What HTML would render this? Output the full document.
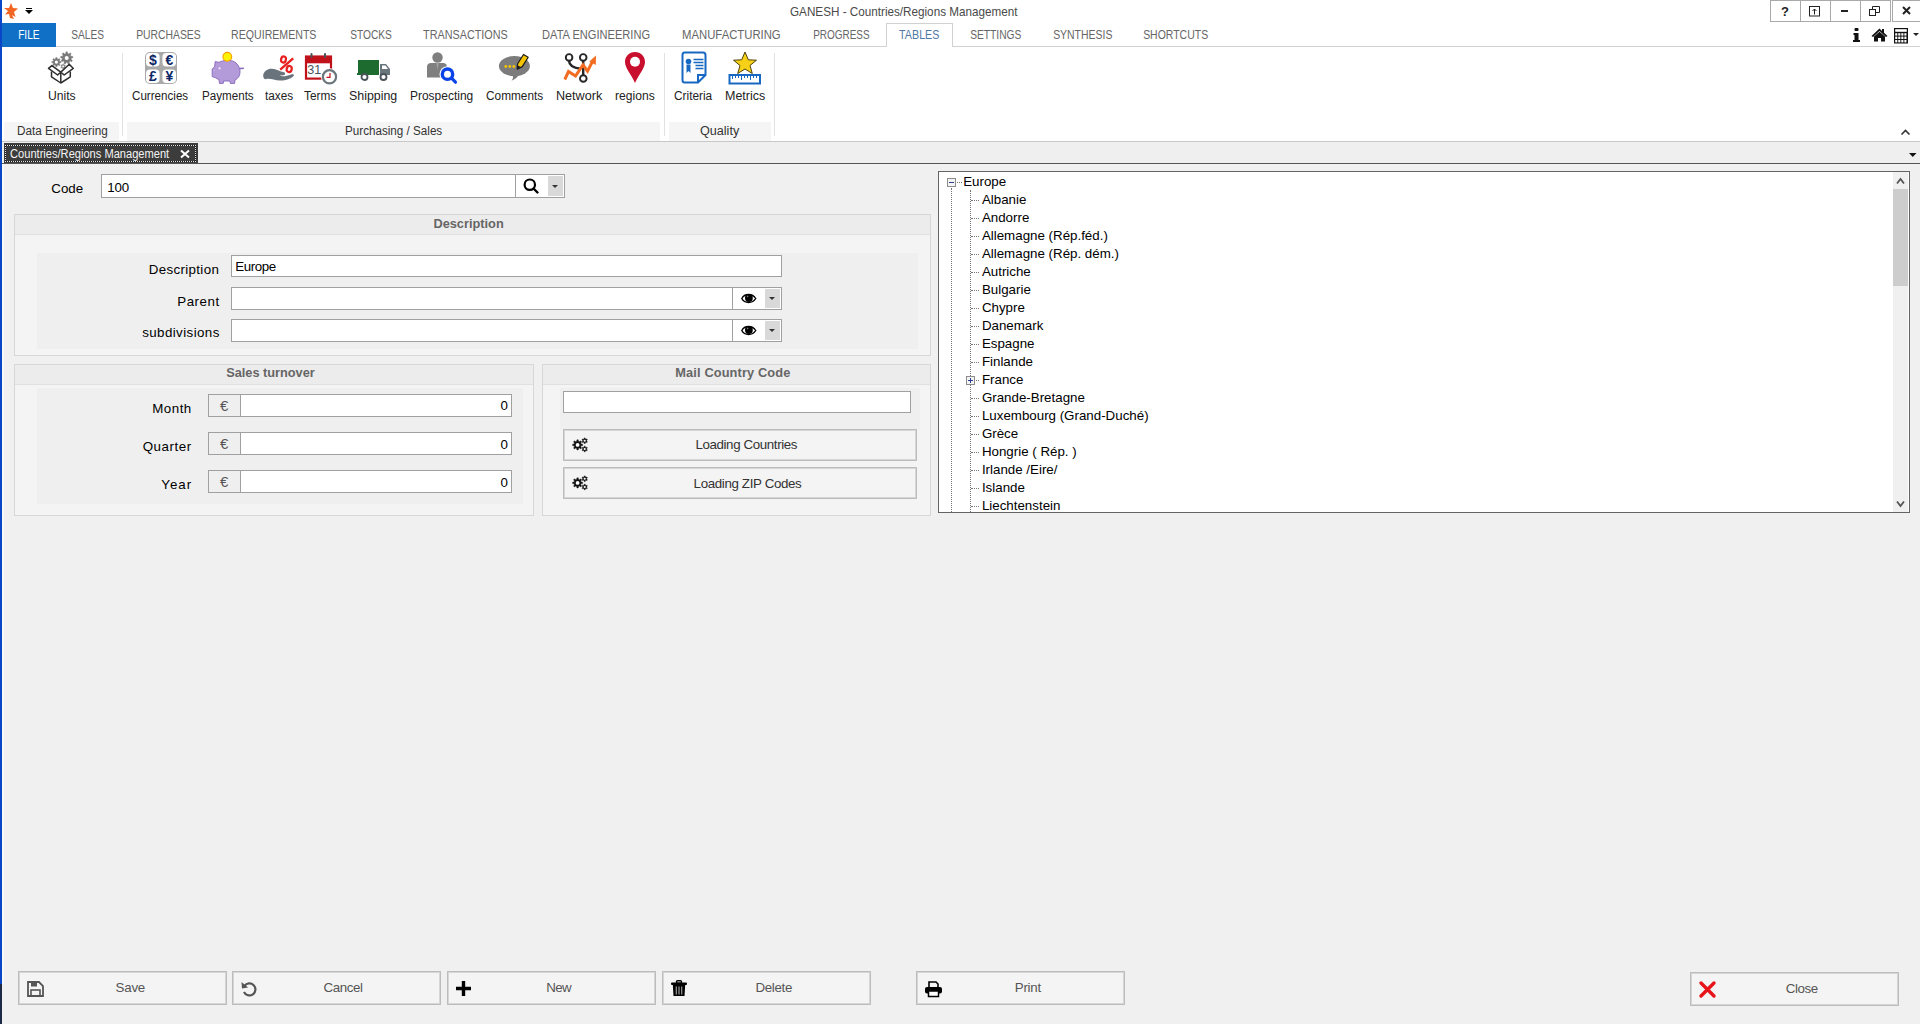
<!DOCTYPE html>
<html><head><meta charset="utf-8"><title>GANESH - Countries/Regions Management</title>
<style>
html,body{margin:0;padding:0;width:1920px;height:1024px;overflow:hidden;background:#f0f0f0;}
body{position:relative;font-family:"Liberation Sans", sans-serif;}
.r{position:absolute;}
.t{position:absolute;white-space:nowrap;font-family:"Liberation Sans", sans-serif;}
svg.r{overflow:visible}
</style></head><body>
<div class="r" style="left:0px;top:0px;width:1920px;height:141px;background:#ffffff;"></div>
<div class="r" style="left:0px;top:0px;width:2px;height:984px;background:#0a46c8;"></div>
<div class="r" style="left:0px;top:984px;width:2px;height:40px;background:#1b2a46;"></div>
<div class="t" style="left:789.77px;top:5.87px;font-size:12.2px;line-height:12.2px;color:#4a4a4a;transform:scaleX(0.9593);transform-origin:0.73px 0;">GANESH - Countries/Regions Management</div>
<svg class="r" style="left:3px;top:2px" width="16" height="18" viewBox="0 0 16 18"><path d="M8 1 L10 6 L15 6.5 L11 10 L12.5 15 L9 13 L11 17 L7 16 L6 12 L2 12.5 L5 9 L1 6 L6 6 Z" fill="#f26522"/></svg>
<div class="r" style="left:26px;top:8px;width:6px;height:1.2px;background:#000;"></div>
<svg class="r" style="left:25px;top:10px" width="8" height="5" viewBox="0 0 8 5"><path d="M0 0 L8 0 L4 4 Z" fill="#000"/></svg>
<div class="r" style="left:1770px;top:0px;width:31px;height:22px;border:1px solid #a9a9a9;box-sizing:border-box;"></div>
<div class="r" style="left:1800px;top:0px;width:31px;height:22px;border:1px solid #a9a9a9;box-sizing:border-box;"></div>
<div class="r" style="left:1830px;top:0px;width:31px;height:22px;border:1px solid #a9a9a9;box-sizing:border-box;"></div>
<div class="r" style="left:1860px;top:0px;width:31px;height:22px;border:1px solid #a9a9a9;box-sizing:border-box;"></div>
<div class="r" style="left:1892px;top:0px;width:31px;height:22px;border:1px solid #a9a9a9;box-sizing:border-box;"></div>
<svg class="r" style="left:1780px;top:5px" width="10" height="12" viewBox="0 0 10 12"><text x="5" y="11" font-family="Liberation Sans" font-weight="bold" font-size="13" text-anchor="middle" fill="#222">?</text></svg>
<svg class="r" style="left:1809px;top:6px" width="12" height="11" viewBox="0 0 12 11"><rect x="0.5" y="0.5" width="10" height="9.5" fill="none" stroke="#222" stroke-width="1"/><path d="M5.5 8.5 V3 M3.5 5 L5.5 3 L7.5 5" fill="none" stroke="#222" stroke-width="1"/></svg>
<div class="r" style="left:1841px;top:10px;width:7px;height:2px;background:#222;"></div>
<svg class="r" style="left:1869px;top:6px" width="12" height="11" viewBox="0 0 12 11"><rect x="0.5" y="3.5" width="6" height="6" fill="none" stroke="#222"/><path d="M3.5 3.5 V0.5 H10.5 V6.5 H6.5" fill="none" stroke="#222"/></svg>
<svg class="r" style="left:1902px;top:6px" width="9" height="9" viewBox="0 0 9 9"><path d="M1 1 L8 8 M8 1 L1 8" stroke="#222" stroke-width="2"/></svg>
<svg class="r" style="left:1853px;top:28px" width="8" height="14" viewBox="0 0 8 14"><rect x="1.5" y="0" width="4" height="3" rx="1" fill="#111"/><path d="M0.5 5 H5.5 V12 H7 V14 H0 V12 H1.5 V7 H0.5 Z" fill="#111"/></svg>
<svg class="r" style="left:1871px;top:28px" width="17" height="14" viewBox="0 0 17 14"><path d="M8.5 0.5 L0.5 8 L2 9 L8.5 3 L15 9 L16.5 8 L13 4.8 V1 H11 V3 Z" fill="#111"/><path d="M3 8.5 L8.5 3.8 L14 8.5 V13.5 H10 V10 H7 V13.5 H3 Z" fill="#111"/></svg>
<svg class="r" style="left:1894px;top:28px" width="16" height="16" viewBox="0 0 16 16"><rect x="0" y="0" width="14" height="15.5" fill="#111"/><rect x="1.2" y="1.2" width="11.6" height="2.6" fill="#fff"/><rect x="1.20" y="5.20" width="2.1" height="2.4" fill="#fff"/><rect x="4.25" y="5.20" width="2.1" height="2.4" fill="#fff"/><rect x="7.30" y="5.20" width="2.1" height="2.4" fill="#fff"/><rect x="10.35" y="5.20" width="2.1" height="2.4" fill="#fff"/><rect x="1.20" y="8.60" width="2.1" height="2.4" fill="#fff"/><rect x="4.25" y="8.60" width="2.1" height="2.4" fill="#fff"/><rect x="7.30" y="8.60" width="2.1" height="2.4" fill="#fff"/><rect x="10.35" y="8.60" width="2.1" height="2.4" fill="#fff"/><rect x="1.20" y="12.00" width="2.1" height="2.4" fill="#fff"/><rect x="4.25" y="12.00" width="2.1" height="2.4" fill="#fff"/><rect x="7.30" y="12.00" width="2.1" height="2.4" fill="#fff"/><rect x="10.35" y="12.00" width="2.1" height="2.4" fill="#fff"/></svg>
<svg class="r" style="left:1913px;top:33px" width="7" height="4" viewBox="0 0 7 4"><path d="M0 0 H6 L3 3 Z" fill="#222"/></svg>
<div class="r" style="left:0px;top:46px;width:1920px;height:1px;background:#d2d2d2;"></div>
<div class="r" style="left:2px;top:23px;width:54px;height:24px;background:#0f70c6;"></div>
<div class="t" style="left:17.74px;top:29.13px;font-size:12.6px;line-height:12.6px;color:#ffffff;transform:scaleX(0.8087);transform-origin:0.76px 0;">FILE</div>
<div class="r" style="left:886px;top:23px;width:67px;height:24px;background:#ffffff;border:1px solid #d2d2d2;box-sizing:border-box;border-bottom:none;"></div>
<div class="t" style="left:71.44px;top:29.13px;font-size:12.6px;line-height:12.6px;color:#666666;transform:scaleX(0.8079);transform-origin:0.76px 0;">SALES</div>
<div class="t" style="left:135.74px;top:29.13px;font-size:12.6px;line-height:12.6px;color:#666666;transform:scaleX(0.8230);transform-origin:0.76px 0;">PURCHASES</div>
<div class="t" style="left:231.24px;top:29.13px;font-size:12.6px;line-height:12.6px;color:#666666;transform:scaleX(0.8409);transform-origin:0.76px 0;">REQUIREMENTS</div>
<div class="t" style="left:349.54px;top:29.13px;font-size:12.6px;line-height:12.6px;color:#666666;transform:scaleX(0.8088);transform-origin:0.76px 0;">STOCKS</div>
<div class="t" style="left:422.74px;top:29.13px;font-size:12.6px;line-height:12.6px;color:#666666;transform:scaleX(0.8579);transform-origin:0.76px 0;">TRANSACTIONS</div>
<div class="t" style="left:541.84px;top:29.13px;font-size:12.6px;line-height:12.6px;color:#666666;transform:scaleX(0.8799);transform-origin:0.76px 0;">DATA ENGINEERING</div>
<div class="t" style="left:681.54px;top:29.13px;font-size:12.6px;line-height:12.6px;color:#666666;transform:scaleX(0.8975);transform-origin:0.76px 0;">MANUFACTURING</div>
<div class="t" style="left:812.64px;top:29.13px;font-size:12.6px;line-height:12.6px;color:#666666;transform:scaleX(0.7911);transform-origin:0.76px 0;">PROGRESS</div>
<div class="t" style="left:899.24px;top:29.13px;font-size:12.6px;line-height:12.6px;color:#4f77a8;transform:scaleX(0.8499);transform-origin:0.76px 0;">TABLES</div>
<div class="t" style="left:970.24px;top:29.13px;font-size:12.6px;line-height:12.6px;color:#666666;transform:scaleX(0.8130);transform-origin:0.76px 0;">SETTINGS</div>
<div class="t" style="left:1053.24px;top:29.13px;font-size:12.6px;line-height:12.6px;color:#666666;transform:scaleX(0.8296);transform-origin:0.76px 0;">SYNTHESIS</div>
<div class="t" style="left:1143.04px;top:29.13px;font-size:12.6px;line-height:12.6px;color:#666666;transform:scaleX(0.8321);transform-origin:0.76px 0;">SHORTCUTS</div>
<div class="r" style="left:4px;top:122px;width:115px;height:19px;background:#f5f5f5;"></div>
<div class="r" style="left:127px;top:122px;width:533px;height:19px;background:#f5f5f5;"></div>
<div class="r" style="left:669px;top:122px;width:102px;height:19px;background:#f5f5f5;"></div>
<div class="r" style="left:122px;top:53px;width:1px;height:83px;background:#e2e2e2;"></div>
<div class="r" style="left:664px;top:53px;width:1px;height:83px;background:#e2e2e2;"></div>
<div class="r" style="left:774px;top:53px;width:1px;height:83px;background:#e2e2e2;"></div>
<div class="t" style="left:16.78px;top:125.14px;font-size:12px;line-height:12px;color:#333;transform:scaleX(0.9778);transform-origin:0.72px 0;">Data Engineering</div>
<div class="t" style="left:345.28px;top:125.14px;font-size:12px;line-height:12px;color:#333;transform:scaleX(0.9711);transform-origin:0.72px 0;">Purchasing / Sales</div>
<div class="t" style="left:700.28px;top:125.14px;font-size:12px;line-height:12px;color:#333;transform:scaleX(1.0512);transform-origin:0.72px 0;">Quality</div>
<div class="t" style="left:47.78px;top:90.04px;font-size:12px;line-height:12px;color:#222;transform:scaleX(1.0137);transform-origin:0.72px 0;">Units</div>
<div class="t" style="left:132.28px;top:90.04px;font-size:12px;line-height:12px;color:#222;transform:scaleX(0.9679);transform-origin:0.72px 0;">Currencies</div>
<div class="t" style="left:201.78px;top:90.04px;font-size:12px;line-height:12px;color:#222;transform:scaleX(0.9682);transform-origin:0.72px 0;">Payments</div>
<div class="t" style="left:265.28px;top:90.04px;font-size:12px;line-height:12px;color:#222;transform:scaleX(0.9824);transform-origin:0.72px 0;">taxes</div>
<div class="t" style="left:304.28px;top:90.04px;font-size:12px;line-height:12px;color:#222;transform:scaleX(0.9852);transform-origin:0.72px 0;">Terms</div>
<div class="t" style="left:349.28px;top:90.04px;font-size:12px;line-height:12px;color:#222;transform:scaleX(1.0328);transform-origin:0.72px 0;">Shipping</div>
<div class="t" style="left:409.78px;top:90.04px;font-size:12px;line-height:12px;color:#222;transform:scaleX(0.9972);transform-origin:0.72px 0;">Prospecting</div>
<div class="t" style="left:486.28px;top:90.04px;font-size:12px;line-height:12px;color:#222;transform:scaleX(0.9856);transform-origin:0.72px 0;">Comments</div>
<div class="t" style="left:556.28px;top:90.04px;font-size:12px;line-height:12px;color:#222;transform:scaleX(1.0511);transform-origin:0.72px 0;">Network</div>
<div class="t" style="left:614.78px;top:90.04px;font-size:12px;line-height:12px;color:#222;transform:scaleX(1.0089);transform-origin:0.72px 0;">regions</div>
<div class="t" style="left:674.28px;top:90.04px;font-size:12px;line-height:12px;color:#222;transform:scaleX(0.9873);transform-origin:0.72px 0;">Criteria</div>
<div class="t" style="left:725.28px;top:90.04px;font-size:12px;line-height:12px;color:#222;transform:scaleX(1.0409);transform-origin:0.72px 0;">Metrics</div>
<div class="r" style="left:0px;top:141px;width:1920px;height:1.5px;background:#c8c8c8;"></div>
<svg class="r" style="left:44px;top:48px" width="36" height="40" viewBox="0 0 36 40"><polygon points="11.55,10.80 11.79,9.54 13.01,9.54 13.25,10.80 14.13,11.17 15.19,10.44 16.06,11.31 15.33,12.37 15.70,13.25 16.96,13.49 16.96,14.71 15.70,14.95 15.33,15.83 16.06,16.89 15.19,17.76 14.13,17.03 13.25,17.40 13.01,18.66 11.79,18.66 11.55,17.40 10.67,17.03 9.61,17.76 8.74,16.89 9.47,15.83 9.10,14.95 7.84,14.71 7.84,13.49 9.10,13.25 9.47,12.37 8.74,11.31 9.61,10.44 10.67,11.17" fill="#7a7a7a" stroke="#7a7a7a" stroke-width="0.4" stroke-linejoin="round"/><circle cx="12.4" cy="14.1" r="1.6" fill="#fff"/><polygon points="21.68,5.53 21.97,3.84 23.43,3.84 23.72,5.53 24.80,5.92 26.09,4.81 27.22,5.76 26.35,7.23 26.93,8.22 28.64,8.21 28.89,9.65 27.28,10.22 27.08,11.36 28.40,12.44 27.66,13.71 26.07,13.12 25.19,13.86 25.50,15.53 24.12,16.04 23.28,14.55 22.12,14.55 21.28,16.04 19.90,15.53 20.21,13.86 19.33,13.12 17.74,13.71 17.00,12.44 18.32,11.36 18.12,10.22 16.51,9.65 16.76,8.21 18.47,8.22 19.05,7.23 18.18,5.76 19.31,4.81 20.60,5.92" fill="#7a7a7a" stroke="#7a7a7a" stroke-width="0.4" stroke-linejoin="round"/><circle cx="22.7" cy="10" r="2.0" fill="#fff"/><polygon points="18.49,16.65 18.66,15.94 19.54,15.94 19.71,16.65 20.31,17.00 21.01,16.79 21.45,17.55 20.92,18.05 20.92,18.75 21.45,19.25 21.01,20.01 20.31,19.80 19.71,20.15 19.54,20.86 18.66,20.86 18.49,20.15 17.89,19.80 17.19,20.01 16.75,19.25 17.28,18.75 17.28,18.05 16.75,17.55 17.19,16.79 17.89,17.00" fill="#8a8a8a" stroke="#8a8a8a" stroke-width="0.4" stroke-linejoin="round"/><circle cx="19.1" cy="18.4" r="0.9" fill="#fff"/><g fill="#fff" stroke="#2e2e2e" stroke-width="1.5" stroke-linejoin="round"><path d="M7.5 23.5 V28.8 L16.8 35 L26.3 28.8 V23.5"/><path d="M4.5 20.4 L7.9 17.6 L16.8 24.1 L13.6 27 Z"/><path d="M29.3 20.4 L25.3 16.2 L16.8 24.1 L20.2 27 Z"/><path d="M16.8 25 V35" fill="none"/></g></svg>
<svg class="r" style="left:145px;top:52px" width="32" height="32" viewBox="0 0 32 32"><rect x="0" y="0" width="32" height="32" rx="5" fill="#a9a9a9"/><rect x="1" y="1" width="13.6" height="13.6" rx="4" fill="#fff"/><rect x="17.4" y="1" width="13.6" height="13.6" rx="4" fill="#fff"/><rect x="1" y="17.4" width="13.6" height="13.6" rx="4" fill="#fff"/><rect x="17.4" y="17.4" width="13.6" height="13.6" rx="4" fill="#fff"/><g font-family="Liberation Sans" font-weight="bold" font-size="14" fill="#0b2566" text-anchor="middle"><text x="7.9" y="13">$</text><text x="24.3" y="13">€</text><text x="7.9" y="29.2">£</text><text x="24.3" y="29.2">¥</text></g></svg>
<svg class="r" style="left:208px;top:50px" width="37" height="35" viewBox="0 0 37 35"><path d="M31.5 18.6 L35.3 18.3" stroke="#8c6fc0" stroke-width="1.6" stroke-linecap="round"/><path d="M4.2 19 L6.6 16.8 L7.2 11.6 L11 12.4 C14 10.6 18 10.3 22 10.5 C28 11 32 16 32 22 C32 26 30 28.5 27 30 L26.6 33.4 L22.4 33.4 L22 31 L15.6 31 L15.2 33.4 L11.4 33.4 L11 29.6 C8.5 28.3 6.8 27.2 4.2 26.6 Z" fill="#b39ad8" stroke="#8c6fc0" stroke-width="1"/><circle cx="11.6" cy="18.3" r="1.1" fill="#f3ecfb"/><circle cx="6.5" cy="20.5" r="0.6" fill="#d8c8ee"/><circle cx="19.3" cy="6.8" r="4.4" fill="#fff200" stroke="#f7a000" stroke-width="1.1"/></svg>
<svg class="r" style="left:260px;top:50px" width="37" height="34" viewBox="0 0 37 34"><path d="M3.2 25 C4 21 8 18.5 12 18.8 C16 19 20 21.5 24 22.3 C25.6 22.7 25.6 25 23.5 25.2 L19.5 25.6 C22 26.8 26 26.5 31 24.5 C33 23.8 34.6 24.5 33.6 26 C31 28.6 26 30.6 20 30.5 C14 30.4 10 27.8 5.5 29.2 C4 29.5 3 27 3.2 25 Z" fill="#68737b"/><g fill="none" stroke="#e8201f" stroke-width="2.2"><ellipse cx="23.5" cy="9.5" rx="2.4" ry="3.1" transform="rotate(15 23.5 9.5)"/><ellipse cx="29.2" cy="19" rx="2.5" ry="3.1" transform="rotate(15 29.2 19)"/></g><path d="M20.2 19.6 L33.2 8.4" stroke="#e8201f" stroke-width="2.4"/></svg>
<svg class="r" style="left:304px;top:52px" width="36" height="34" viewBox="0 0 36 34"><rect x="2" y="4.7" width="25" height="21.9" fill="#fff" stroke="#c0121b" stroke-width="2.2"/><rect x="1" y="3.7" width="27" height="7.6" fill="#c0121b"/><rect x="6.5" y="1" width="2" height="5" rx="1" fill="#49535a"/><rect x="20" y="1" width="2" height="5" rx="1" fill="#49535a"/><text x="3.3" y="22.3" font-family="Liberation Sans" font-size="12.5" fill="#4b555c">31</text><circle cx="25.5" cy="24.8" r="8.5" fill="#fff"/><circle cx="25.5" cy="24.8" r="6.6" fill="#fff" stroke="#6b757c" stroke-width="2.2"/><path d="M26 21 V25.3 H22.5" fill="none" stroke="#c0121b" stroke-width="1.2"/></svg>
<svg class="r" style="left:357px;top:59px" width="35" height="22" viewBox="0 0 35 22"><rect x="1" y="1" width="21" height="15" fill="#1e6b30"/><path d="M23 5 H29 L33 10 V16 H23 Z" fill="#6b757c"/><path d="M25 6.5 H28.5 L31 10 H25 Z" fill="#fff"/><rect x="0" y="14" width="3" height="2" fill="#1e6b30"/><circle cx="7.5" cy="18" r="3" fill="#fff" stroke="#49535a" stroke-width="1.8"/><circle cx="26.5" cy="18" r="3" fill="#fff" stroke="#49535a" stroke-width="1.8"/></svg>
<svg class="r" style="left:426px;top:51px" width="32" height="34" viewBox="0 0 32 34"><circle cx="11.5" cy="6.5" r="5.2" fill="#7f7f7f"/><path d="M1 16 C1 13.5 2.5 12 5 12 L17 12 C19.5 12 21 13.5 21 16 V26.5 H1 Z" fill="#7f7f7f"/><path d="M10.3 12 L11.5 19 L12.7 12 Z" fill="#a3a3a3"/><circle cx="21.5" cy="23.2" r="8" fill="#fff"/><circle cx="21.5" cy="23.2" r="5.2" fill="none" stroke="#0a43e6" stroke-width="3.4"/><path d="M25.5 27.2 L29.5 31.2" stroke="#0a43e6" stroke-width="3.2" stroke-linecap="round"/></svg>
<svg class="r" style="left:498px;top:52px" width="33" height="31" viewBox="0 0 33 31"><ellipse cx="16.4" cy="14.1" rx="15.5" ry="10.1" fill="#7c7c7c"/><path d="M14 22 L22 21 C20 25 17 27.5 13.5 28.8 C15.5 26.5 15.5 24.5 14 22 Z" fill="#7c7c7c"/><g fill="#f5c400"><circle cx="7.8" cy="14.5" r="1.4"/><circle cx="11.8" cy="14.5" r="1.4"/><circle cx="15.8" cy="14.5" r="1.4"/></g><path d="M19.5 12 L25.5 2.5 L30.2 5.2 L24.3 14.6 L19.3 17.2 Z" fill="#f5c400" stroke="#1a1a1a" stroke-width="1.2" stroke-linejoin="round"/><path d="M19.4 17 L20.2 13.5 L22.8 15.2 Z" fill="#1a1a1a"/></svg>
<svg class="r" style="left:563px;top:52px" width="35" height="33" viewBox="0 0 35 33"><g fill="none" stroke="#262626" stroke-width="1.9"><circle cx="6.1" cy="5.4" r="3.3"/><circle cx="20.2" cy="5.4" r="3.3"/><circle cx="20.3" cy="26.5" r="3.3"/></g><path d="M6.1 9 C6.1 14.5 12 16 17.5 16.8" fill="none" stroke="#262626" stroke-width="2.4"/><path d="M20.2 8.8 V23" stroke="#262626" stroke-width="2.4"/><path d="M1.8 27.5 L5.5 19.5 L12.5 24 L20 12.8 L24.5 19.2 L30 8.5" fill="none" stroke="#f26d21" stroke-width="3" stroke-linejoin="miter"/><path d="M26.3 9.5 L33 3.5 L32.8 13 Z" fill="#f26d21"/></svg>
<svg class="r" style="left:624px;top:51px" width="22" height="33" viewBox="0 0 22 33"><path d="M11 1 C5 1 1 5.5 1 11 C1 17 7 23 11 32 C15 23 21 17 21 11 C21 5.5 17 1 11 1 Z" fill="#c8102e"/><circle cx="11" cy="10.8" r="5" fill="#fff"/></svg>
<svg class="r" style="left:681px;top:51px" width="27" height="34" viewBox="0 0 27 34"><path d="M3.5 1.5 H22 C23.5 1.5 24.5 2.5 24.5 4 V24 L17 31.5 H3.5 C2 31.5 1.5 30.5 1.5 29 V4 C1.5 2.5 2 1.5 3.5 1.5 Z" fill="#fff" stroke="#1768c2" stroke-width="2"/><path d="M24.5 24 H17 V31.5" fill="none" stroke="#1768c2" stroke-width="2"/><circle cx="7.5" cy="10.5" r="2.8" fill="#1768c2"/><path d="M5.5 13.5 H9.5 V22 L7.5 20 L5.5 22 Z" fill="#1768c2"/><g stroke="#1768c2" stroke-width="1.6"><path d="M12.5 8.5 H22.5 M12.5 11.5 H22.5 M14.5 14.5 H22.5 M14.5 17.5 H22.5"/></g></svg>
<svg class="r" style="left:728px;top:51px" width="34" height="35" viewBox="0 0 34 35"><path d="M17 1 L20.3 8.8 L28.5 9.2 L22 14.5 L24.3 22.5 L17 18 L9.7 22.5 L12 14.5 L5.5 9.2 L13.7 8.8 Z" fill="#f7d117" stroke="#3a3000" stroke-width="0.9" stroke-linejoin="round"/><rect x="1.5" y="24" width="30.5" height="8.5" fill="#fff" stroke="#1768c2" stroke-width="2"/><g stroke="#1768c2" stroke-width="1"><path d="M4.5 25 V28 M7.5 25 V27 M10.5 25 V27 M13.5 25 V29 M16.5 25 V27 M19.5 25 V27 M22.5 25 V29 M25.5 25 V27 M28.5 25 V27"/></g></svg>
<div class="r" style="left:2px;top:142px;width:1918px;height:21px;background:#efefef;"></div>
<div class="r" style="left:4px;top:143px;width:194px;height:20px;background:#3c3c3c;"></div>
<div class="r" style="left:5px;top:145px;width:191px;height:17px;border:1px solid #1a1a1a;box-sizing:border-box;"></div>
<div class="r" style="left:5px;top:145px;width:191px;height:17px;border:1px dotted #e6e6e6;box-sizing:border-box;"></div>
<div class="t" style="left:10.28px;top:147.74px;font-size:12px;line-height:12px;color:#f4f4f4;transform:scaleX(0.9245);transform-origin:0.72px 0;">Countries/Regions Management</div>
<svg class="r" style="left:180px;top:150px" width="10" height="8" viewBox="0 0 10 8"><path d="M1 0.5 L9 7.5 M9 0.5 L1 7.5" stroke="#fff" stroke-width="2"/></svg>
<div class="r" style="left:2px;top:163px;width:1918px;height:1px;background:#555555;"></div>
<svg class="r" style="left:1908.5px;top:152.5px" width="8" height="5" viewBox="0 0 8 5"><path d="M0 0 H7.5 L3.75 4 Z" fill="#111"/></svg>
<div class="r" style="left:1898px;top:130px;width:1px;height:1px;"></div>
<svg class="r" style="left:1900px;top:128px" width="12" height="8" viewBox="0 0 12 8"><path d="M1.5 6.5 L5.5 2.5 L9.5 6.5" fill="none" stroke="#333" stroke-width="1.6"/></svg>
<div class="r" style="left:2px;top:164px;width:1918px;height:860px;background:#f0f0f0;"></div>
<div class="r" style="left:2px;top:164px;width:2px;height:820px;background:#f8f8f8;"></div>
<div class="t" style="left:51.20px;top:182.32px;font-size:13.33px;line-height:13.33px;color:#000;letter-spacing:0.068px;">Code</div>
<div class="r" style="left:101px;top:174px;width:464px;height:24px;background:#ffffff;border:1px solid #a0a0a0;box-sizing:border-box;"></div>
<div class="r" style="left:515px;top:175px;width:1px;height:22px;background:#a0a0a0;"></div>
<div class="t" style="left:107.20px;top:180.62px;font-size:13.33px;line-height:13.33px;color:#000;letter-spacing:-0.095px;">100</div>
<svg class="r" style="left:523px;top:178px" width="17" height="17" viewBox="0 0 17 17"><circle cx="6.8" cy="6.7" r="5.2" fill="none" stroke="#000" stroke-width="2.2"/><path d="M10.5 10.5 L14.5 14.5" stroke="#000" stroke-width="2.4" stroke-linecap="round"/></svg>
<div class="r" style="left:548px;top:176px;width:15px;height:20px;background:#d9d9d9;"></div>
<svg class="r" style="left:552px;top:185px" width="7" height="4" viewBox="0 0 7 4"><path d="M0 0 H6 L3 3 Z" fill="#333"/></svg>
<div class="r" style="left:14px;top:214px;width:917px;height:142px;background:#f4f4f4;border:1px solid #d7d7d7;box-sizing:border-box;"></div>
<div class="r" style="left:15px;top:215px;width:915px;height:19px;background:#ececec;"></div>
<div class="r" style="left:15px;top:234px;width:915px;height:1px;background:#e0e0e0;"></div>
<div class="t" style="left:433.43px;top:217.66px;font-size:12.8px;line-height:12.8px;color:#666666;font-weight:bold;letter-spacing:-0.011px;">Description</div>
<div class="r" style="left:37px;top:253px;width:881px;height:96px;background:#efefef;"></div>
<div class="t" style="left:148.70px;top:262.52px;font-size:13.33px;line-height:13.33px;color:#000;letter-spacing:0.347px;">Description</div>
<div class="t" style="left:177.20px;top:294.72px;font-size:13.33px;line-height:13.33px;color:#000;letter-spacing:0.563px;">Parent</div>
<div class="t" style="left:142.20px;top:326.32px;font-size:13.33px;line-height:13.33px;color:#000;letter-spacing:0.414px;">subdivisions</div>
<div class="r" style="left:231px;top:255px;width:551px;height:22px;background:#fff;border:1px solid #a0a0a0;box-sizing:border-box;"></div>
<div class="t" style="left:235.20px;top:259.52px;font-size:13.33px;line-height:13.33px;color:#000;letter-spacing:-0.378px;">Europe</div>
<div class="r" style="left:231px;top:287px;width:551px;height:23px;background:#fff;border:1px solid #a0a0a0;box-sizing:border-box;"></div>
<div class="r" style="left:732px;top:288px;width:1px;height:21px;background:#a0a0a0;"></div>
<svg class="r" style="left:740.5px;top:292.5px" width="16" height="11" viewBox="0 0 16 11"><path d="M0.8 5.5 C3.5 0.2 11.5 0.2 14.7 5.5 C11.5 10.8 3.5 10.8 0.8 5.5 Z" fill="#fff" stroke="#000" stroke-width="1.4"/><circle cx="7.9" cy="5" r="3.9" fill="#000"/><circle cx="6.6" cy="3.4" r="0.8" fill="#777"/></svg>
<div class="r" style="left:765px;top:289px;width:15px;height:19px;background:#d9d9d9;"></div>
<svg class="r" style="left:769px;top:297px" width="7" height="4" viewBox="0 0 7 4"><path d="M0 0 H6 L3 3 Z" fill="#333"/></svg>
<div class="r" style="left:231px;top:319px;width:551px;height:23px;background:#fff;border:1px solid #a0a0a0;box-sizing:border-box;"></div>
<div class="r" style="left:732px;top:320px;width:1px;height:21px;background:#a0a0a0;"></div>
<svg class="r" style="left:740.5px;top:324.5px" width="16" height="11" viewBox="0 0 16 11"><path d="M0.8 5.5 C3.5 0.2 11.5 0.2 14.7 5.5 C11.5 10.8 3.5 10.8 0.8 5.5 Z" fill="#fff" stroke="#000" stroke-width="1.4"/><circle cx="7.9" cy="5" r="3.9" fill="#000"/><circle cx="6.6" cy="3.4" r="0.8" fill="#777"/></svg>
<div class="r" style="left:765px;top:321px;width:15px;height:19px;background:#d9d9d9;"></div>
<svg class="r" style="left:769px;top:329px" width="7" height="4" viewBox="0 0 7 4"><path d="M0 0 H6 L3 3 Z" fill="#333"/></svg>
<div class="r" style="left:14px;top:364px;width:520px;height:152px;background:#f4f4f4;border:1px solid #d7d7d7;box-sizing:border-box;"></div>
<div class="r" style="left:15px;top:365px;width:518px;height:19px;background:#ececec;"></div>
<div class="r" style="left:15px;top:384px;width:518px;height:1px;background:#e0e0e0;"></div>
<div class="t" style="left:226.23px;top:367.06px;font-size:12.8px;line-height:12.8px;color:#666666;font-weight:bold;letter-spacing:-0.033px;">Sales turnover</div>
<div class="r" style="left:37px;top:388px;width:486px;height:116px;background:#efefef;"></div>
<div class="t" style="left:152.20px;top:401.52px;font-size:13.33px;line-height:13.33px;color:#000;letter-spacing:0.509px;">Month</div>
<div class="r" style="left:208px;top:394px;width:304px;height:23px;background:#fff;border:1px solid #a0a0a0;box-sizing:border-box;"></div>
<div class="r" style="left:209px;top:395px;width:31px;height:21px;background:#efefef;"></div>
<div class="r" style="left:240px;top:395px;width:1px;height:21px;background:#a0a0a0;"></div>
<div class="t" style="left:220.33px;top:398.73px;font-size:14.5px;line-height:14.5px;color:#555;transform:scaleX(1.0281);transform-origin:0.87px 0;">€</div>
<div class="t" style="left:500.60px;top:399.32px;font-size:13.33px;line-height:13.33px;color:#000;">0</div>
<div class="t" style="left:142.70px;top:439.72px;font-size:13.33px;line-height:13.33px;color:#000;letter-spacing:0.568px;">Quarter</div>
<div class="r" style="left:208px;top:432px;width:304px;height:23px;background:#fff;border:1px solid #a0a0a0;box-sizing:border-box;"></div>
<div class="r" style="left:209px;top:433px;width:31px;height:21px;background:#efefef;"></div>
<div class="r" style="left:240px;top:433px;width:1px;height:21px;background:#a0a0a0;"></div>
<div class="t" style="left:220.33px;top:436.93px;font-size:14.5px;line-height:14.5px;color:#555;transform:scaleX(1.0281);transform-origin:0.87px 0;">€</div>
<div class="t" style="left:500.60px;top:437.52px;font-size:13.33px;line-height:13.33px;color:#000;">0</div>
<div class="t" style="left:161.20px;top:478.22px;font-size:13.33px;line-height:13.33px;color:#000;letter-spacing:1.042px;">Year</div>
<div class="r" style="left:208px;top:470px;width:304px;height:23px;background:#fff;border:1px solid #a0a0a0;box-sizing:border-box;"></div>
<div class="r" style="left:209px;top:471px;width:31px;height:21px;background:#efefef;"></div>
<div class="r" style="left:240px;top:471px;width:1px;height:21px;background:#a0a0a0;"></div>
<div class="t" style="left:220.33px;top:475.43px;font-size:14.5px;line-height:14.5px;color:#555;transform:scaleX(1.0281);transform-origin:0.87px 0;">€</div>
<div class="t" style="left:500.60px;top:476.02px;font-size:13.33px;line-height:13.33px;color:#000;">0</div>
<div class="r" style="left:542px;top:364px;width:389px;height:152px;background:#f4f4f4;border:1px solid #d7d7d7;box-sizing:border-box;"></div>
<div class="r" style="left:543px;top:365px;width:387px;height:19px;background:#ececec;"></div>
<div class="r" style="left:543px;top:384px;width:387px;height:1px;background:#e0e0e0;"></div>
<div class="t" style="left:675.33px;top:366.86px;font-size:12.8px;line-height:12.8px;color:#666666;font-weight:bold;letter-spacing:0.121px;">Mail Country Code</div>
<div class="r" style="left:560px;top:388px;width:360px;height:42px;background:#efefef;"></div>
<div class="r" style="left:563px;top:391px;width:348px;height:22px;background:#fff;border:1px solid #a0a0a0;box-sizing:border-box;"></div>
<div class="r" style="left:563px;top:429px;width:354px;height:32px;background:#f4f4f4;border:1px solid #bcbcbc;box-sizing:border-box;box-shadow:inset 0 0 0 1px #d6d6d6;"></div>
<svg class="r" style="left:572px;top:438px" width="16" height="15" viewBox="0 0 16 15"><polygon points="4.69,3.34 4.92,1.85 6.28,1.85 6.51,3.34 7.47,3.74 8.69,2.85 9.65,3.81 8.76,5.03 9.16,5.99 10.65,6.22 10.65,7.58 9.16,7.81 8.76,8.77 9.65,9.99 8.69,10.95 7.47,10.06 6.51,10.46 6.28,11.95 4.92,11.95 4.69,10.46 3.73,10.06 2.51,10.95 1.55,9.99 2.44,8.77 2.04,7.81 0.55,7.58 0.55,6.22 2.04,5.99 2.44,5.03 1.55,3.81 2.51,2.85 3.73,3.74" fill="#111" stroke="#111" stroke-width="0.4" stroke-linejoin="round"/><circle cx="5.6" cy="6.9" r="1.9" fill="#fff"/><polygon points="12.05,0.89 12.19,-0.10 13.21,-0.10 13.35,0.89 13.99,1.26 14.92,0.88 15.43,1.77 14.64,2.38 14.64,3.12 15.43,3.73 14.92,4.62 13.99,4.24 13.35,4.61 13.21,5.60 12.19,5.60 12.05,4.61 11.41,4.24 10.48,4.62 9.97,3.73 10.76,3.12 10.76,2.38 9.97,1.77 10.48,0.88 11.41,1.26" fill="#111" stroke="#111" stroke-width="0.4" stroke-linejoin="round"/><circle cx="12.7" cy="2.75" r="1.1" fill="#fff"/><polygon points="12.05,9.14 12.19,8.15 13.21,8.15 13.35,9.14 13.99,9.51 14.92,9.13 15.43,10.02 14.64,10.63 14.64,11.37 15.43,11.98 14.92,12.87 13.99,12.49 13.35,12.86 13.21,13.85 12.19,13.85 12.05,12.86 11.41,12.49 10.48,12.87 9.97,11.98 10.76,11.37 10.76,10.63 9.97,10.02 10.48,9.13 11.41,9.51" fill="#111" stroke="#111" stroke-width="0.4" stroke-linejoin="round"/><circle cx="12.7" cy="11" r="1.1" fill="#fff"/></svg>
<div class="t" style="left:695.40px;top:438.32px;font-size:13.33px;line-height:13.33px;color:#333;letter-spacing:-0.378px;">Loading Countries</div>
<div class="r" style="left:563px;top:467px;width:354px;height:32px;background:#f4f4f4;border:1px solid #bcbcbc;box-sizing:border-box;box-shadow:inset 0 0 0 1px #d6d6d6;"></div>
<svg class="r" style="left:572px;top:476px" width="16" height="15" viewBox="0 0 16 15"><polygon points="4.69,3.34 4.92,1.85 6.28,1.85 6.51,3.34 7.47,3.74 8.69,2.85 9.65,3.81 8.76,5.03 9.16,5.99 10.65,6.22 10.65,7.58 9.16,7.81 8.76,8.77 9.65,9.99 8.69,10.95 7.47,10.06 6.51,10.46 6.28,11.95 4.92,11.95 4.69,10.46 3.73,10.06 2.51,10.95 1.55,9.99 2.44,8.77 2.04,7.81 0.55,7.58 0.55,6.22 2.04,5.99 2.44,5.03 1.55,3.81 2.51,2.85 3.73,3.74" fill="#111" stroke="#111" stroke-width="0.4" stroke-linejoin="round"/><circle cx="5.6" cy="6.9" r="1.9" fill="#fff"/><polygon points="12.05,0.89 12.19,-0.10 13.21,-0.10 13.35,0.89 13.99,1.26 14.92,0.88 15.43,1.77 14.64,2.38 14.64,3.12 15.43,3.73 14.92,4.62 13.99,4.24 13.35,4.61 13.21,5.60 12.19,5.60 12.05,4.61 11.41,4.24 10.48,4.62 9.97,3.73 10.76,3.12 10.76,2.38 9.97,1.77 10.48,0.88 11.41,1.26" fill="#111" stroke="#111" stroke-width="0.4" stroke-linejoin="round"/><circle cx="12.7" cy="2.75" r="1.1" fill="#fff"/><polygon points="12.05,9.14 12.19,8.15 13.21,8.15 13.35,9.14 13.99,9.51 14.92,9.13 15.43,10.02 14.64,10.63 14.64,11.37 15.43,11.98 14.92,12.87 13.99,12.49 13.35,12.86 13.21,13.85 12.19,13.85 12.05,12.86 11.41,12.49 10.48,12.87 9.97,11.98 10.76,11.37 10.76,10.63 9.97,10.02 10.48,9.13 11.41,9.51" fill="#111" stroke="#111" stroke-width="0.4" stroke-linejoin="round"/><circle cx="12.7" cy="11" r="1.1" fill="#fff"/></svg>
<div class="t" style="left:693.60px;top:476.52px;font-size:13.33px;line-height:13.33px;color:#333;letter-spacing:-0.358px;">Loading ZIP Codes</div>
<div class="r" style="left:938px;top:171px;width:972px;height:342px;background:#ffffff;border:1px solid #646464;box-sizing:border-box;"></div>
<div class="r" style="left:1893px;top:172px;width:15px;height:340px;background:#f0f0f0;"></div>
<div class="r" style="left:1893px;top:189px;width:15px;height:97px;background:#cdcdcd;"></div>
<svg class="r" style="left:1896px;top:177px" width="9" height="8" viewBox="0 0 9 8"><path d="M1 6.5 L4.5 2 L8 6.5" fill="none" stroke="#555" stroke-width="1.8"/></svg>
<svg class="r" style="left:1896px;top:500px" width="9" height="8" viewBox="0 0 9 8"><path d="M1 1.5 L4.5 6 L8 1.5" fill="none" stroke="#555" stroke-width="1.8"/></svg>
<div class="r" style="left:947px;top:178px;width:9px;height:9px;background:#f4f4f4;border:1px solid #8c8c8c;box-sizing:border-box;"></div>
<div class="r" style="left:949px;top:182px;width:5px;height:1px;background:#2a3f8f;"></div>
<div class="r" style="left:957px;top:182px;width:5px;height:1px;border-top:1px dotted #777"></div>
<div class="r" style="left:951px;top:188px;width:1px;height:324px;border-left:1px dotted #777"></div>
<div class="r" style="left:970px;top:190px;width:1px;height:322px;border-left:1px dotted #777"></div>
<div class="t" style="left:963.20px;top:174.62px;font-size:13.33px;line-height:13.33px;color:#000;">Europe</div>
<div class="r" style="left:939px;top:172px;width:953px;height:340px;overflow:hidden">
<div class="r" style="left:32px;top:28px;width:8px;height:1px;border-top:1px dotted #777"></div>
<div class="t" style="left:42.90px;top:20.52px;font-size:13.33px;line-height:13.33px;color:#000">Albanie</div>
<div class="r" style="left:32px;top:46px;width:8px;height:1px;border-top:1px dotted #777"></div>
<div class="t" style="left:42.90px;top:38.52px;font-size:13.33px;line-height:13.33px;color:#000">Andorre</div>
<div class="r" style="left:32px;top:64px;width:8px;height:1px;border-top:1px dotted #777"></div>
<div class="t" style="left:42.90px;top:56.52px;font-size:13.33px;line-height:13.33px;color:#000">Allemagne (Rép.féd.)</div>
<div class="r" style="left:32px;top:82px;width:8px;height:1px;border-top:1px dotted #777"></div>
<div class="t" style="left:42.90px;top:74.52px;font-size:13.33px;line-height:13.33px;color:#000">Allemagne (Rép. dém.)</div>
<div class="r" style="left:32px;top:100px;width:8px;height:1px;border-top:1px dotted #777"></div>
<div class="t" style="left:42.90px;top:92.52px;font-size:13.33px;line-height:13.33px;color:#000">Autriche</div>
<div class="r" style="left:32px;top:118px;width:8px;height:1px;border-top:1px dotted #777"></div>
<div class="t" style="left:42.90px;top:110.52px;font-size:13.33px;line-height:13.33px;color:#000">Bulgarie</div>
<div class="r" style="left:32px;top:136px;width:8px;height:1px;border-top:1px dotted #777"></div>
<div class="t" style="left:42.90px;top:128.52px;font-size:13.33px;line-height:13.33px;color:#000">Chypre</div>
<div class="r" style="left:32px;top:154px;width:8px;height:1px;border-top:1px dotted #777"></div>
<div class="t" style="left:42.90px;top:146.52px;font-size:13.33px;line-height:13.33px;color:#000">Danemark</div>
<div class="r" style="left:32px;top:172px;width:8px;height:1px;border-top:1px dotted #777"></div>
<div class="t" style="left:42.90px;top:164.52px;font-size:13.33px;line-height:13.33px;color:#000">Espagne</div>
<div class="r" style="left:32px;top:190px;width:8px;height:1px;border-top:1px dotted #777"></div>
<div class="t" style="left:42.90px;top:182.52px;font-size:13.33px;line-height:13.33px;color:#000">Finlande</div>
<div class="r" style="left:32px;top:208px;width:8px;height:1px;border-top:1px dotted #777"></div>
<div class="t" style="left:42.90px;top:200.52px;font-size:13.33px;line-height:13.33px;color:#000">France</div>
<div class="r" style="left:32px;top:226px;width:8px;height:1px;border-top:1px dotted #777"></div>
<div class="t" style="left:42.90px;top:218.52px;font-size:13.33px;line-height:13.33px;color:#000">Grande-Bretagne</div>
<div class="r" style="left:32px;top:244px;width:8px;height:1px;border-top:1px dotted #777"></div>
<div class="t" style="left:42.90px;top:236.52px;font-size:13.33px;line-height:13.33px;color:#000">Luxembourg (Grand-Duché)</div>
<div class="r" style="left:32px;top:262px;width:8px;height:1px;border-top:1px dotted #777"></div>
<div class="t" style="left:42.90px;top:254.52px;font-size:13.33px;line-height:13.33px;color:#000">Grèce</div>
<div class="r" style="left:32px;top:280px;width:8px;height:1px;border-top:1px dotted #777"></div>
<div class="t" style="left:42.90px;top:272.52px;font-size:13.33px;line-height:13.33px;color:#000">Hongrie ( Rép. )</div>
<div class="r" style="left:32px;top:298px;width:8px;height:1px;border-top:1px dotted #777"></div>
<div class="t" style="left:42.90px;top:290.52px;font-size:13.33px;line-height:13.33px;color:#000">Irlande /Eire/</div>
<div class="r" style="left:32px;top:316px;width:8px;height:1px;border-top:1px dotted #777"></div>
<div class="t" style="left:42.90px;top:308.52px;font-size:13.33px;line-height:13.33px;color:#000">Islande</div>
<div class="r" style="left:32px;top:334px;width:8px;height:1px;border-top:1px dotted #777"></div>
<div class="t" style="left:42.90px;top:326.52px;font-size:13.33px;line-height:13.33px;color:#000">Liechtenstein</div>
</div>
<div class="r" style="left:966px;top:376px;width:9px;height:9px;background:#f4f4f4;border:1px solid #8c8c8c;box-sizing:border-box;"></div>
<div class="r" style="left:968px;top:380px;width:5px;height:1px;background:#2a3f8f;"></div>
<div class="r" style="left:970px;top:378px;width:1px;height:5px;background:#2a3f8f;"></div>
<div class="r" style="left:18px;top:971px;width:209px;height:34px;background:#f4f4f4;border:1px solid #bcbcbc;box-sizing:border-box;box-shadow:inset 0 0 0 1px #d6d6d6;"></div>
<svg class="r" style="left:27px;top:981px" width="17" height="16" viewBox="0 0 17 16"><path d="M1 1 H12 L16 5 V15 H1 Z" fill="none" stroke="#555" stroke-width="1.8"/><rect x="4" y="1" width="6" height="4.5" fill="#555"/><rect x="4" y="9" width="9" height="6" fill="none" stroke="#555" stroke-width="1.6"/></svg>
<div class="t" style="left:115.50px;top:981.47px;font-size:13.33px;line-height:13.33px;color:#555;letter-spacing:-0.205px;">Save</div>
<div class="r" style="left:232px;top:971px;width:209px;height:34px;background:#f4f4f4;border:1px solid #bcbcbc;box-sizing:border-box;box-shadow:inset 0 0 0 1px #d6d6d6;"></div>
<svg class="r" style="left:241px;top:981px" width="17" height="16" viewBox="0 0 17 16"><path d="M3.5 5 A6 6 0 1 1 3 11" fill="none" stroke="#555" stroke-width="2.2"/><path d="M0.5 1 L1 7.5 L7 6.5 Z" fill="#555"/></svg>
<div class="t" style="left:323.60px;top:981.47px;font-size:13.33px;line-height:13.33px;color:#555;letter-spacing:-0.400px;">Cancel</div>
<div class="r" style="left:447px;top:971px;width:209px;height:34px;background:#f4f4f4;border:1px solid #bcbcbc;box-sizing:border-box;box-shadow:inset 0 0 0 1px #d6d6d6;"></div>
<svg class="r" style="left:455px;top:980px" width="17" height="17" viewBox="0 0 17 17"><path d="M8.5 1 V16 M1 8.5 H16" stroke="#000" stroke-width="3.4"/></svg>
<div class="t" style="left:546.20px;top:981.47px;font-size:13.33px;line-height:13.33px;color:#555;letter-spacing:-0.553px;">New</div>
<div class="r" style="left:662px;top:971px;width:209px;height:34px;background:#f4f4f4;border:1px solid #bcbcbc;box-sizing:border-box;box-shadow:inset 0 0 0 1px #d6d6d6;"></div>
<svg class="r" style="left:671px;top:980px" width="16" height="17" viewBox="0 0 16 17"><rect x="5.5" y="0.8" width="5" height="2.5" rx="1" fill="none" stroke="#000" stroke-width="1.4"/><rect x="0" y="2.5" width="16" height="2.5" rx="1" fill="#000"/><path d="M1.8 5 H14.2 L13.5 16 H2.5 Z" fill="#000"/><path d="M5.3 6.5 V14.5 M8 6.5 V14.5 M10.7 6.5 V14.5" stroke="#999" stroke-width="1.2"/></svg>
<div class="t" style="left:755.45px;top:981.47px;font-size:13.33px;line-height:13.33px;color:#555;letter-spacing:-0.309px;">Delete</div>
<div class="r" style="left:916px;top:971px;width:209px;height:34px;background:#f4f4f4;border:1px solid #bcbcbc;box-sizing:border-box;box-shadow:inset 0 0 0 1px #d6d6d6;"></div>
<svg class="r" style="left:925px;top:981px" width="17" height="16" viewBox="0 0 17 16"><path d="M4 6 V1 H11 L13 3 V6" fill="none" stroke="#000" stroke-width="1.6"/><rect x="0" y="6" width="17" height="6.5" rx="2" fill="#000"/><rect x="3.5" y="10" width="10" height="5.5" fill="#fff" stroke="#000" stroke-width="1.5"/></svg>
<div class="t" style="left:1014.80px;top:981.47px;font-size:13.33px;line-height:13.33px;color:#555;letter-spacing:-0.262px;">Print</div>
<div class="r" style="left:1690px;top:972px;width:209px;height:34px;background:#f4f4f4;border:1px solid #bcbcbc;box-sizing:border-box;box-shadow:inset 0 0 0 1px #d6d6d6;"></div>
<svg class="r" style="left:1699px;top:981px" width="17" height="17" viewBox="0 0 17 17"><path d="M2 2 L15 15 M15 2 L2 15" stroke="#e8141c" stroke-width="3.4" stroke-linecap="round"/></svg>
<div class="t" style="left:1785.70px;top:982.47px;font-size:13.33px;line-height:13.33px;color:#555;letter-spacing:-0.376px;">Close</div>
<div class="r" style="left:0px;top:0px;width:2px;height:984px;background:#0a46c8;"></div>
<div class="r" style="left:0px;top:984px;width:2px;height:40px;background:#1b2a46;"></div>
</body></html>
